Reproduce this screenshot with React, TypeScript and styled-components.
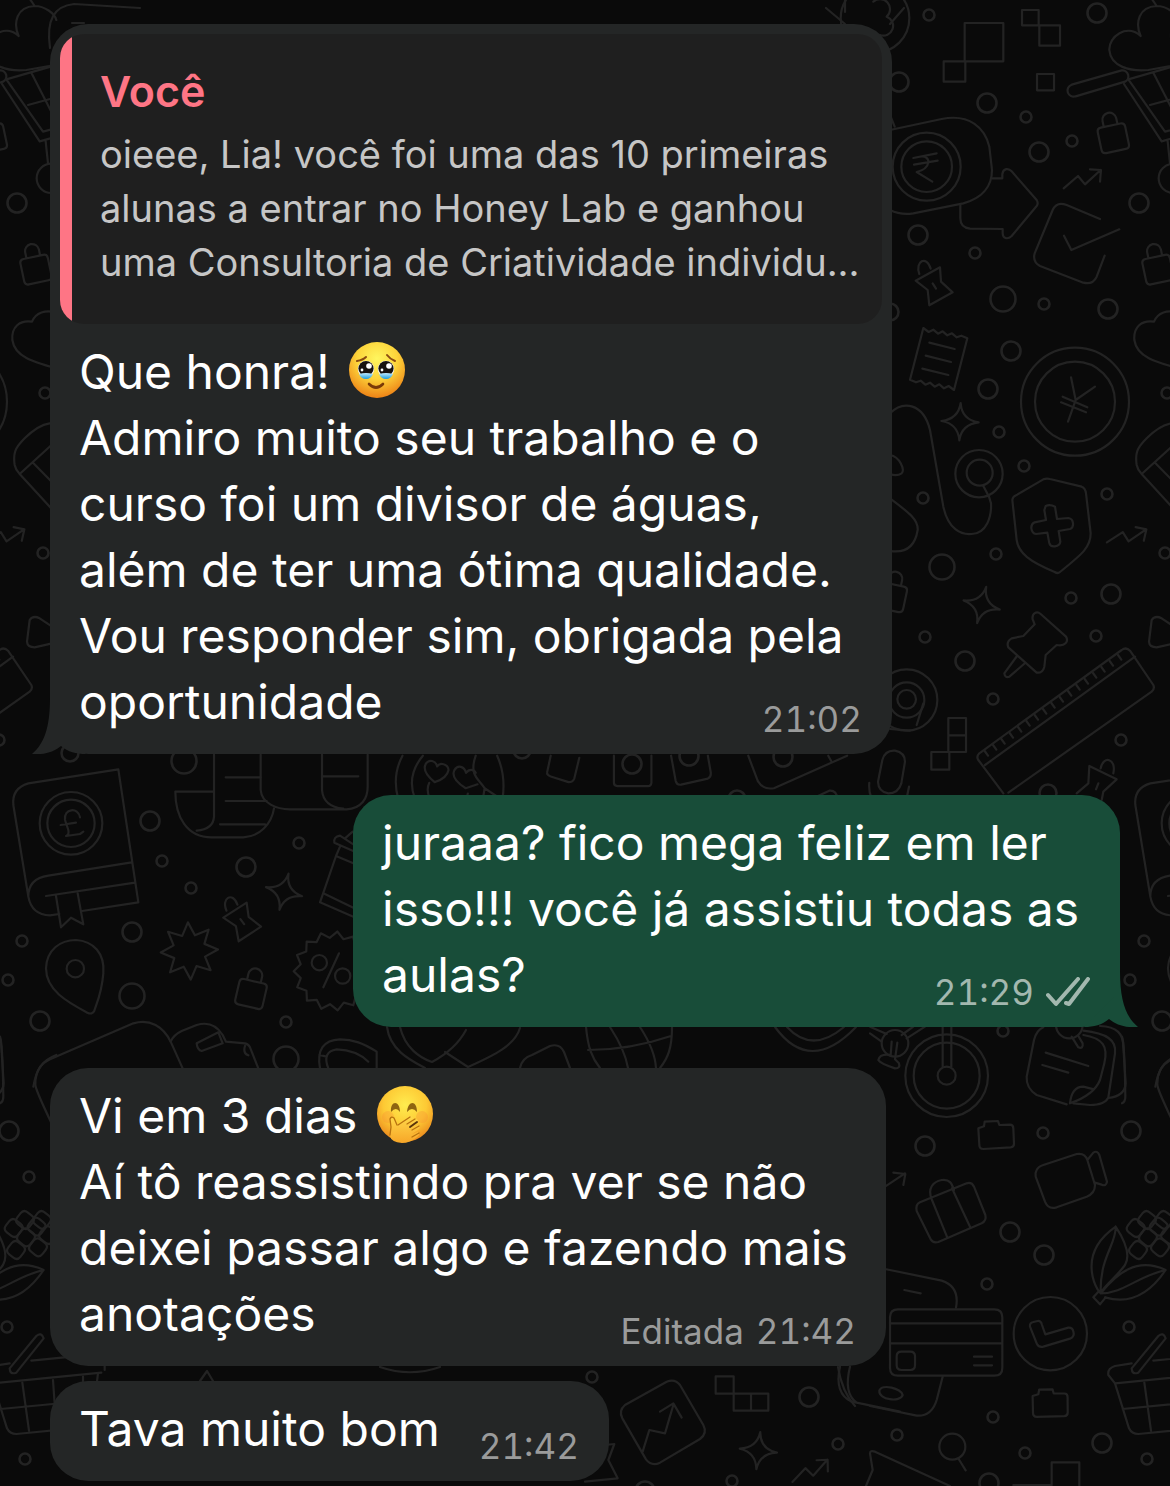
import React from "react";
import styled, { createGlobalStyle, css } from "styled-components";

const colors = {
  wallpaper: "#0a0a0a",
  doodle: "#232323",
  incoming: "#242626",
  outgoing: "#184d39",
  quote: "#1f1f1f",
  accent: "#fe7585",
};

const GlobalStyle = createGlobalStyle`
  *, *::before, *::after { box-sizing: border-box; }
  body {
    margin: 0;
    background: ${colors.wallpaper};
    font-family: Inter, "Noto Sans", "Liberation Sans", sans-serif;
    color: #ffffff;
  }
`;

const Chat = styled.main`
  position: relative;
  min-height: 100vh;
  overflow: hidden;
`;

const WallpaperSvg = styled.svg`
  position: absolute;
  inset: 0;
  width: 100%;
  height: 100%;
  fill: none;
  stroke: ${colors.doodle};
  stroke-linecap: round;
  stroke-linejoin: round;
`;

const Thread = styled.ol`
  position: relative;
  display: flex;
  flex-direction: column;
  gap: 41px;
  margin: 0;
  padding: 24px 50px 5px;
  list-style: none;
`;

const Group = styled.li<{ $mine?: boolean }>`
  display: flex;
  flex-direction: column;
  align-items: ${(p) => (p.$mine ? "flex-end" : "flex-start")};
  gap: 15px;
`;

const Bubble = styled.article<{ $mine?: boolean; $max: number; $quoted?: boolean }>`
  position: relative;
  max-width: min(100%, ${(p) => p.$max}px);
  border-radius: 38px;
  background: ${(p) => (p.$mine ? colors.outgoing : colors.incoming)};
  ${(p) => p.$quoted && css`padding-top: 10px;`}
`;

const TailSvg = styled.svg<{ $mine?: boolean }>`
  position: absolute;
  bottom: 0;
  width: 58px;
  height: 60px;
  fill: ${(p) => (p.$mine ? colors.outgoing : colors.incoming)};
  ${(p) => (p.$mine ? css`right: -18px; transform: scaleX(-1);` : css`left: -18px;`)}
`;

const Quote = styled.blockquote`
  margin: 0 10px;
  padding: 30px 20px 35px 40px;
  border-radius: 24px;
  background: linear-gradient(to right, ${colors.accent} 12px, ${colors.quote} 12px);
`;

const QuoteAuthor = styled.cite`
  display: block;
  margin-bottom: 9px;
  font-size: 43px;
  font-style: normal;
  font-weight: 600;
  line-height: 54px;
  color: ${colors.accent};
`;

const QuoteText = styled.p`
  margin: 0;
  font-size: 38px;
  line-height: 54px;
  color: #c6c6c6;
`;

const Body = styled.div`
  display: flow-root;
  padding: 15px 30px 19px 29px;
  font-size: 48px;
  line-height: 66px;
`;

const Message = styled.span`
  white-space: pre-line;
`;

const Meta = styled.span<{ $mine?: boolean }>`
  float: right;
  display: flex;
  align-items: center;
  gap: 12px;
  margin: 33px 0 -1px 39px;
  font-size: 35px;
  line-height: 34px;
  font-variant-numeric: tabular-nums;
  color: ${(p) => (p.$mine ? "#a3b8af" : "#9a9b9b")};
`;

const TicksSvg = styled.svg`
  width: 44px;
  height: 30px;
  fill: none;
  stroke: currentColor;
  stroke-width: 4;
  stroke-linecap: round;
  stroke-linejoin: round;
`;

const EmojiSvg = styled.svg`
  width: 58px;
  height: 58px;
  margin-left: 5px;
  vertical-align: -10px;
`;

function Tail({ mine }: { mine?: boolean }) {
  return (
    <TailSvg $mine={mine} viewBox="0 0 58 60" aria-hidden="true">
      <path d="M18 4 C18 34 12 50 0 60 C12 61 22 58 29 52 C36 58 44 60 54 60 L24 30 V4 Z" />
    </TailSvg>
  );
}

function HoldingTears() {
  return (
    <EmojiSvg viewBox="0 0 58 58" role="img" aria-label="🥹">
      <defs>
        <radialGradient id="faceA" cx=".5" cy=".3" r=".72">
          <stop offset="0" stopColor="#fff65f" />
          <stop offset=".5" stopColor="#fdd43a" />
          <stop offset="1" stopColor="#ec7d14" />
        </radialGradient>
        <linearGradient id="tear" x1="0" y1="0" x2="0" y2="1">
          <stop offset="0" stopColor="#bfeaff" />
          <stop offset="1" stopColor="#1c9ddc" />
        </linearGradient>
      </defs>
      <circle cx="29" cy="29" r="28" fill="url(#faceA)" />
      <g fill="none" stroke="#8a4a10" strokeWidth="2" strokeLinecap="round">
        <path d="M9 20 Q15 19 18 16" />
        <path d="M39 14 Q42 18 47 20" />
        <path d="M21 43 Q28 50 35 43" stroke="#7a3a08" strokeWidth="2.6" />
      </g>
      {[18, 38].map((x) => (
        <g key={x}>
          <circle cx={x} cy="28" r="8.2" fill="#ffffff" />
          <circle cx={x} cy="27.5" r="7.6" fill="#17120f" />
          <circle cx={x + 3} cy="25" r="2.8" fill="#ffffff" />
          <circle cx={x - 4} cy="29" r="1.4" fill="#ffffff" />
          <path d={`M${x - 7} 33 Q${x} 31 ${x + 7} 33 Q${x + 5} 38 ${x} 38 Q${x - 5} 38 ${x - 7} 33Z`} fill="url(#tear)" />
        </g>
      ))}
    </EmojiSvg>
  );
}

function HandOverMouth() {
  return (
    <EmojiSvg viewBox="0 0 58 58" role="img" aria-label="🤭">
      <defs>
        <radialGradient id="faceB" cx=".5" cy=".34" r=".7">
          <stop offset="0" stopColor="#ffec4f" />
          <stop offset=".55" stopColor="#fdc934" />
          <stop offset="1" stopColor="#e9801a" />
        </radialGradient>
        <linearGradient id="hand" x1="0" y1="0" x2="0" y2="1">
          <stop offset="0" stopColor="#ffd84a" />
          <stop offset="1" stopColor="#f7a628" />
        </linearGradient>
      </defs>
      <circle cx="29" cy="29" r="28" fill="url(#faceB)" />
      <circle cx="12" cy="32" r="6" fill="#f98a35" opacity=".3" />
      <circle cx="46" cy="32" r="6" fill="#f98a35" opacity=".3" />
      <g fill="#8f6411">
        <path d="M15 27 C14 15 24 15 24 27 Q20 21 15 27Z" />
        <path d="M31 27 C32 15 41 15 41 27 Q36 21 31 27Z" />
      </g>
      <path
        d="M15 44 L14 34 Q15 30 18 33 L22 40 L33 32 Q37 30 37 34 L31 39 L39 34 Q43 34 42 38 L35 43 L42 40 Q45 41 43 44 L36 49 L42 47 Q45 49 41 52 Q34 58 26 58 Q15 57 14 51Z"
        fill="url(#hand)"
      />
      <g fill="none" stroke="#b8720f" strokeWidth="1.3" strokeLinecap="round">
        <path d="M14 50 L15 42 L14 34 Q15 31 18 33 L21 40" />
        <path d="M22 40 L34 32" />
        <path d="M31 39 L39 34" />
        <path d="M36 45 L43 41" />
        <path d="M36 52 L43 48" />
        <path d="M34 42 L41 37" stroke="#5a330a" strokeWidth="2" />
      </g>
    </EmojiSvg>
  );
}

function DoubleTick() {
  return (
    <TicksSvg viewBox="0 0 44 30" role="img" aria-label="Entregue">
      <path d="M2 18 L10 27 L32 2" />
      <path d="M20 26 L23 27 L42 2" />
    </TicksSvg>
  );
}

/* ---------- Wallpaper doodles ---------- */

const TILE = 1122;

const bubbles: number[][] = [
  [929, 15, 6], [1097, 13, 10], [899, 82, 10], [987, 103, 10], [1026, 117, 6], [1072, 141, 6], [1039, 152, 10],
  [1139, 203, 10], [918, 235, 10], [975, 253, 6], [1003, 299, 13], [1044, 304, 6], [1108, 309, 10], [890, 312, 9],
  [1011, 351, 10], [988, 389, 10], [1167, 393, 6], [999, 432, 6], [1024, 466, 6], [1107, 494, 6], [923, 498, 6],
  [996, 554, 6], [942, 567, 13], [1165, 553, 6], [1071, 598, 6], [1111, 594, 10], [925, 637, 6], [1096, 636, 6],
  [965, 661, 10], [993, 699, 6], [1121, 740, 6], [1048, 793, 9], [70, 753, 9], [184, 761, 13], [150, 821, 10],
  [162, 861, 6], [299, 843, 6], [246, 867, 10], [191, 888, 6], [22, 941, 6], [132, 932, 10], [8, 980, 6],
  [132, 996, 13], [286, 1022, 6], [286, 1059, 13], [1003, 1031, 6], [1162, 1021, 10], [1043, 1133, 6],
  [1131, 1131, 10], [925, 1146, 10], [1151, 1177, 6], [1010, 1232, 10], [1044, 1255, 10], [987, 1284, 6],
  [1129, 1327, 6], [993, 1417, 6], [897, 1435, 6], [1102, 1443, 10], [1025, 1453, 6], [1147, 1459, 6],
  [989, 1483, 10], [592, 1377, 6], [809, 1397, 10], [838, 1444, 6], [732, 1481, 6], [645, 1491, 10],
  [522, 750, 9], [632, 764, 10], [737, 799, 9], [783, 757, 10], [689, 756, 10],
];

const radial = (cx: number, cy: number, outer: number, inner: number, n: number, turn = 0) =>
  "M" +
  Array.from({ length: n * 2 }, (_, i) => {
    const a = (Math.PI * i) / n - Math.PI / 2 + turn;
    const r = i % 2 ? inner : outer;
    return `${(cx + r * Math.cos(a)).toFixed(1)} ${(cy + r * Math.sin(a)).toFixed(1)}`;
  }).join(" L") +
  "Z";

const ticks = Array.from({ length: 17 }, (_, i) => {
  const x = 344 + i * 25;
  const y = 1083 - i * 18;
  return `M${x} ${y} l10 14`;
}).join(" ");

const lock = "M-42 -22 Q-42 -34 -30 -34 H30 Q42 -34 42 -22 V32 Q42 44 30 44 H-30 Q-42 44 -42 32Z M-21 -34 V-52 A21 21 0 0 1 21 -52 V-34";
const spark = "M2 -56 Q5 -6 56 2 Q5 8 -2 56 Q-6 6 -56 -2 Q-5 -8 2 -56Z";
const trend = "M-56 28 L-13 -9 L8 16 L55 -27 M23 -29 L56 -27 L53 8";
const clip = "M-55 -18 L18 -58 L21 -15 L56 17 L-14 56 L-19 10Z M-44 -38 C-58 -76 -22 -96 -10 -54 M-4 -10 L6 6";
const folder = "M-53 -22 L-36 -28 L-34 -42 L6 -44 L10 -32 L42 -33 Q52 -33 52 -22 L54 24 Q54 34 44 35 L-38 40 Q-50 40 -50 28Z";
const kernel = "M-23 -8 Q-23 -23 -8 -23 H8 Q23 -23 23 -8 V8 Q23 23 8 23 H-8 Q-23 23 -23 8Z";

type Stamp = [shape: string, x: number, y: number, turn: number];
type Region = { x: number; y: number; k: number; paths: string[]; stamps?: Stamp[]; rings?: number[][] };

const regions: Region[] = [
  {
    x: 870, y: 0, k: 3,
    rings: [[15, 55, 103], [910, 535, 44], [170, 500, 102], [170, 500, 76], [615, 1205, 162], [615, 1205, 120]],
    stamps: [[lock, 729, 410, -12], [lock, 863, 804, -12], [trend, 637, 537, 0], [clip, 192, 860, 0]],
    paths: [
      "M10 5 A30 30 0 1 1 50 50 A28 28 0 1 1 30 105",
      "M284 69 H400 V184 H284Z M221 184 H286 V245 H221Z M456 30 H506 V76 H456Z M508 76 H570 V137 H508Z M501 222 H552 V271 H501Z",
      "M812 108 C770 70 716 110 718 150 C722 200 780 215 835 210 L950 190 M812 108 C795 70 805 20 860 18 C890 18 920 40 925 60 M845 -4 L860 18",
      "M605 254 L755 211 A18 18 0 0 1 765 245 L617 289 A18 18 0 0 1 605 254Z",
      "M775 238 L950 188 M775 238 L885 395 L960 375 M762 252 L875 424 L960 400 M850 218 L910 335 M840 315 L950 285 M893 424 L900 490",
      "M60 390 L215 357 C300 340 345 385 358 440 L366 510 C366 560 335 595 280 610 L130 640 C100 645 80 640 60 630 M60 345 L74 380",
      "M130 474 L200 460 M132 494 L203 482 M150 470 C185 465 185 505 140 516 L187 545",
      "M366 535 L397 535 L397 522 C400 505 415 503 425 514 L500 600 Q506 610 500 618 L425 708 C412 720 398 715 398 700 L398 687 L300 686 C280 684 271 675 271 655 L271 615",
      "M690 657 L590 615 Q560 603 548 630 L494 760 Q487 785 510 798 L640 848 Q668 855 680 830 L704 767 M582 707 L604 750 L748 688",
      "M935 940 C890 925 862 940 852 965 C815 960 790 980 793 1020 C800 1070 850 1085 950 1112",
      "M160 984 l16 12 14 -7 14 12 14 -7 14 12 14 -6 14 12 14 -5 18 8 L252 1170 l-16 -12 -14 7 -14 -12 -14 7 -14 -12 -14 6 -14 -12 -14 5 -18 -8Z M178 1028 L254 1047 M167 1067 L243 1086 M157 1106 L235 1125",
      "M603 1132 L617 1200 L675 1160 M617 1200 L594 1265 M578 1190 L652 1222 M573 1207 L648 1237",
    ],
  },
  {
    x: 870, y: 390, k: 3,
    rings: [[327, 251, 71], [329, 248, 39], [110, 930, 92], [110, 930, 53], [110, 928, 28]],
    stamps: [[spark, 270, 95, 0], [spark, 335, 645, 12], [trend, 770, 437, 8], [lock, 65, 617, 12]],
    paths: [
      "M60 70 C100 30 160 40 180 120 L220 350 C235 420 275 435 305 432 C350 430 365 380 363 340 L357 320 L340 288",
      "M905 100 Q870 105 830 145 C800 175 795 190 800 225 Q803 240 815 252 L960 410 M815 252 L960 120 M855 218 L950 315",
      "M520 268 Q530 264 540 267 L635 290 Q646 294 648 310 L662 430 C662 470 640 490 570 546 Q563 552 554 546 C480 515 445 490 440 450 L427 330 Q428 320 438 316Z",
      "M527 348 Q540 342 555 350 L561 387 L595 384 Q608 386 609 400 Q610 414 600 417 L566 423 L571 455 Q570 467 555 469 Q541 471 538 460 L532 428 L498 432 Q486 430 484 415 Q483 402 494 397 L528 390 L523 360Z",
      "M60 325 C120 370 145 390 143 420 C135 470 105 490 60 483 M60 195 C90 200 105 240 95 250 Q80 260 60 252",
      "M488 688 C485 670 500 662 512 672 L588 740 C597 755 585 770 560 765 L527 795 L523 830 Q518 850 500 848 L415 772 Q408 755 425 745 L460 738 L494 703Z M441 798 L403 850 Q405 865 418 860 L462 822",
      "M845 690 Q855 675 875 685 L935 725 Q945 745 925 757 L860 772 Q838 772 837 755Z",
      "M325 1110 Q318 1100 328 1090 L755 780 Q768 770 780 782 L850 885 Q855 897 845 905 L415 1208 M325 1110 L400 1210 M345 1125 L795 800",
      ticks,
      "M160 940 L140 1005 M60 1017 L120 1022",
      "M235 984 H288 V1086 H235Z M235 1036 H288 M184 1086 H238 V1139 H184Z",
      "M37 1110 Q45 1080 75 1082 Q105 1088 105 1115 L94 1180 Q85 1210 55 1210 Q25 1205 24 1175Z M117 1190 L112 1215",
      "M658 1128 L740 1168 L700 1205 L695 1230 M658 1128 L655 1180 L620 1210 M692 1135 C700 1095 740 1105 730 1150 M685 1180 L678 1198",
    ],
  },
  {
    x: 0, y: 740, k: 3,
    rings: [[213, 250, 94], [213, 250, 71], [958, 668, 23], [1028, 708, 23], [226, 686, 26]],
    stamps: [[spark, 852, 455, 12], [clip, 726, 547, -4], [lock, 754, 757, 13]],
    paths: [
      "M355 88 L85 130 Q35 145 40 195 L85 470 Q95 525 150 526 L178 522 M246 513 L415 487 L355 88 M85 470 C85 430 110 412 145 407 L395 367 M138 468 L405 428 M168 468 L183 562 L213 533 L250 553 L233 460",
      "M240 232 C235 200 190 205 195 240 L205 270 Q208 285 198 288 L240 282 L250 275 M182 255 L228 248",
      "M642 44 V230 Q640 268 590 272 M640 155 H526 C526 230 560 292 635 292 H730 C780 290 815 250 822 205 M677 112 H782 M677 183 H800 M660 253 H795",
      "M782 44 V150 C785 190 830 208 870 208 H1040 C1085 205 1103 175 1103 140 V44 M966 44 V150 Q970 200 1030 206 M970 109 H1075",
      radial(568, 633, 86, 50, 8, -0.05),
      "M1058 275 L1035 295 M1060 313 L1020 287 Q1000 290 1003 308 L1065 335 M1020 320 L1008 348 L1060 370 M1008 348 L960 487 L1060 530 M970 460 L1060 503",
      radial(1000, 693, 119, 100, 15, 0.1),
      "M1017 640 L970 742",
      "M138 685 C140 630 180 600 228 600 C280 603 315 640 310 700 C305 760 290 790 283 812 Q277 825 262 818 C200 785 138 750 138 685Z",
      "M100 1040 C110 985 125 970 150 958 L400 850 C450 835 490 860 512 905 L548 985",
      "M512 905 Q520 885 545 873 L590 855 Q640 840 668 885 L678 905 L735 910 Q745 912 750 922 L775 985 M590 910 L655 877 L668 910 L605 933 Q592 930 590 910Z M735 918 Q728 940 745 946",
      "M960 985 C950 930 970 900 1020 898 C1060 898 1090 910 1130 935 V985 M985 985 Q965 935 1010 928 Q1070 930 1105 965 M958 945 L980 950",
      "M0 890 Q8 910 10 1070 Q10 1085 0 1090",
    ],
  },
  {
    x: 870, y: 1010, k: 3,
    rings: [
      [230, 197, 124], [230, 197, 99], [230, 197, 27], [75, 100, 40], [598, 45, 40], [541, 971, 110], [247, 1310, 39],
    ],
    stamps: [
      [folder, 378, 377, 0], [folder, 540, 1182, 2],
      [kernel, 804, 720, 38], [kernel, 834, 682, 38], [kernel, 797, 654, 38], [kernel, 831, 630, 38],
      [kernel, 870, 712, 38], [kernel, 900, 675, 38], [kernel, 866, 650, 38], [kernel, 882, 630, 38],
    ],
    paths: [
      "M218 50 V170 M244 50 V170 M0 70 L35 95 M0 50 L50 72 M95 75 L130 50 M110 85 L165 50",
      "M65 95 L62 135 Q30 130 25 150 Q30 160 75 175 Q92 175 87 160 L75 148 L82 98",
      "M520 52 Q500 60 492 90 L470 200 Q468 235 500 255 L590 283 M640 75 C700 85 715 110 703 160 L690 210 Q672 255 600 280 Q605 230 640 230 L672 238",
      "M640 62 C710 70 740 90 735 130 L715 262 Q705 285 660 285 L610 280 M690 48 C740 50 760 70 760 110 L767 220 Q765 258 715 264",
      "M527 128 L655 168 M517 165 L595 188 M605 80 L625 112 Q640 118 638 100 L625 78",
      "M925 135 Q860 160 862 225 Q865 250 960 440",
      "M500 480 Q505 470 520 465 L620 432 Q645 428 652 450 L675 525 Q675 550 650 560 L560 592 Q535 600 525 575 L497 500 Q495 488 500 480Z M652 450 L670 428 Q682 420 688 435 L711 515 Q708 530 695 524 L675 518",
      "M150 577 L290 520 Q305 515 312 530 L346 615 Q350 632 335 640 L205 696 Q188 700 182 688 L140 603 Q136 583 150 577Z M186 570 L232 683 M246 535 L300 650 M186 570 C170 535 190 515 215 510 C240 507 245 520 252 540",
      "M45 530 L105 490 M70 488 L106 492 L100 525",
      "M737 650 C680 690 655 740 668 800 Q675 830 690 848 M737 650 C740 700 690 740 692 845 M737 650 C770 700 780 740 765 765 C740 800 710 820 692 848 M692 850 C740 790 800 740 887 780 C840 850 780 885 705 862 M692 850 C760 850 800 800 887 780 M685 845 L670 862 L690 883 L707 862",
      "M45 777 L215 812 Q270 830 258 893 M103 840 L152 850 M218 1100 L200 1170 Q185 1220 140 1217 L0 1188",
      "M28 1142 C35 1120 95 1135 98 1155 C92 1178 25 1170 28 1142Z",
      "M84 898 H373 Q397 898 397 922 V1073 Q397 1097 373 1097 H84 Q60 1097 60 1073 V922 Q60 898 84 898Z M60 940 H397 M60 1000 H397 M312 1040 H366 M312 1066 H366 M94 1025 H121 Q135 1025 135 1039 V1066 Q135 1080 121 1080 H94 Q80 1080 80 1066 V1039 Q80 1025 94 1025Z",
      "M480 950 Q478 938 490 936 L503 933 Q513 932 516 945 L526 973 L595 953 Q608 952 610 965 Q615 980 600 986 L520 1010 Q505 1013 500 1000Z",
      "M785 1075 L865 978 Q880 965 887 985 L805 1088 Q785 1095 785 1075Z M785 1060 L735 1068 Q712 1075 715 1095 L735 1120 L1060 1088 M850 1052 L1070 1030 V1080",
      "M735 1120 L777 1255 Q785 1272 805 1272 L1030 1250 L1050 1090 M758 1197 L1040 1170 M823 1118 L843 1262 M915 1110 L925 1255 M1005 1100 V1250",
      "M266 1347 L287 1381 M430 1425 H545 V1357 H628 V1428",
    ],
  },
  {
    x: 580, y: 1350, k: 3,
    stamps: [[spark, 535, 302, 4], [trend, 690, 362, -6]],
    paths: [
      "M135 165 L260 95 Q285 85 300 105 L370 225 Q383 250 360 267 L240 338 Q215 350 198 328 L127 205 Q115 182 135 165Z M188 305 L208 240 L255 250 L280 165 M240 185 L280 160 L305 203",
      "M407 79 H461 V131 H407Z M461 131 H565 V182 H461Z M513 131 V182",
      "M780 50 Q762 130 815 155 L960 185 M810 50 Q790 130 830 158",
      "M75 285 L103 282 L85 330 L113 385 L15 395",
      "M858 408 L878 360 L870 310 Q870 300 885 305 L1110 408",
    ],
  },
  {
    x: 340, y: 740, k: 2.8,
    paths: [
      "M175 44 Q145 100 163 165 M232 44 Q185 100 210 165 M380 44 C360 100 390 110 405 135 L450 165 M440 44 Q465 100 455 165 M405 135 L400 165 M250 120 Q240 140 252 165 M358 150 L354 165",
      "M265 118 C240 98 232 82 240 67 C250 52 268 58 272 74 C280 62 302 66 304 84 C300 104 285 112 265 118Z M352 135 C325 118 313 100 320 85 C330 68 348 74 353 92 C362 80 375 82 380 92 M352 135 L385 124",
      "M590 44 L580 90 Q578 98 590 102 L640 118 Q652 118 656 108 L670 50 M767 44 V120 Q767 129 777 129 H862 Q872 129 872 118 V44 M927 44 L940 115 Q943 127 955 125 L1030 108 Q1040 103 1038 90 L1030 44",
      "M1143 44 L1170 115 Q1185 140 1215 135 L1420 44 M1367 44 L1375 58 M1320 165 L1370 142 Q1390 140 1393 165 M1482 120 Q1480 145 1488 162",
    ],
  },
  {
    x: 0, y: 0, k: 1,
    paths: [
      "M50 48 C46 20 54 6 74 4 L140 8 M72 23 H84",
      "M387 1027 C390 1050 410 1060 425 1068 M400 1027 C405 1048 420 1058 432 1062 C445 1055 458 1045 466 1030 M445 1052 L468 1067 C495 1055 515 1045 520 1028",
      "M520 1068 Q522 1058 532 1055 L550 1046 Q560 1043 564 1052 L570 1068 M586 1027 C588 1048 592 1058 600 1068 M672 1027 C672 1048 668 1058 660 1068 M610 1027 Q625 1050 628 1068 M640 1027 Q655 1050 656 1068 M588 1050 Q630 1050 671 1036",
      "M775 1027 Q810 1075 856 1027 M787 1027 Q812 1054 844 1027",
      "M826 8 L845 24 M845 0 V12 M890 24 L904 8 M200 1381 L207 1371 L213 1381 M380 1367 C400 1374 420 1374 440 1367 M838 1367 Q842 1392 855 1406",
    ],
  },
];

function Wallpaper() {
  return (
    <WallpaperSvg viewBox="0 0 1170 1486" preserveAspectRatio="xMidYMin slice" aria-hidden="true">
      <defs>
        <g id="tile">
          {bubbles.map(([x, y, r], i) => (
            <circle key={i} cx={x} cy={y} r={r - 0.5} strokeWidth="2.6" />
          ))}
          {regions.map((g, i) => (
            <g key={i} transform={`translate(${g.x} ${g.y}) scale(${1 / g.k})`} strokeWidth={2.2 * g.k}>
              {g.rings?.map(([x, y, r], j) => <circle key={j} cx={x} cy={y} r={r} />)}
              {g.paths.map((d, j) => <path key={j} d={d} />)}
              {g.stamps?.map(([d, x, y, a], j) => (
                <path key={j} d={d} transform={`translate(${x} ${y}) rotate(${a})`} />
              ))}
            </g>
          ))}
        </g>
      </defs>
      <use href="#tile" />
      <use href="#tile" x={-TILE} />
      <use href="#tile" x={TILE} />
    </WallpaperSvg>
  );
}

export default function App() {
  return (
    <Chat>
      <GlobalStyle />
      <Wallpaper />
      <Thread>
        <Group>
          <Bubble $max={842} $quoted>
            <Quote>
              <QuoteAuthor>Você</QuoteAuthor>
              <QuoteText>
                oieee, Lia! você foi uma das 10 primeiras alunas a entrar no Honey Lab e ganhou uma Consultoria de
                Criatividade individu...
              </QuoteText>
            </Quote>
            <Body>
              <Message>
                Que honra! <HoldingTears />
                {"\nAdmiro muito seu trabalho e o curso foi um divisor de águas, além de ter uma ótima qualidade.\nVou responder sim, obrigada pela oportunidade"}
              </Message>
              <Meta>
                <time>21:02</time>
              </Meta>
            </Body>
            <Tail />
          </Bubble>
        </Group>
        <Group $mine>
          <Bubble $mine $max={767}>
            <Body>
              <Message>juraaa? fico mega feliz em ler isso!!! você já assistiu todas as aulas?</Message>
              <Meta $mine>
                <time>21:29</time>
                <DoubleTick />
              </Meta>
            </Body>
            <Tail mine />
          </Bubble>
        </Group>
        <Group>
          <Bubble $max={836}>
            <Body>
              <Message>
                Vi em 3 dias <HandOverMouth />
                {"\nAí tô reassistindo pra ver se não deixei passar algo e fazendo mais anotações"}
              </Message>
              <Meta>
                <span>Editada</span>
                <time>21:42</time>
              </Meta>
            </Body>
          </Bubble>
          <Bubble $max={836}>
            <Body>
              <Message>Tava muito bom</Message>
              <Meta>
                <time>21:42</time>
              </Meta>
            </Body>
          </Bubble>
        </Group>
      </Thread>
    </Chat>
  );
}
